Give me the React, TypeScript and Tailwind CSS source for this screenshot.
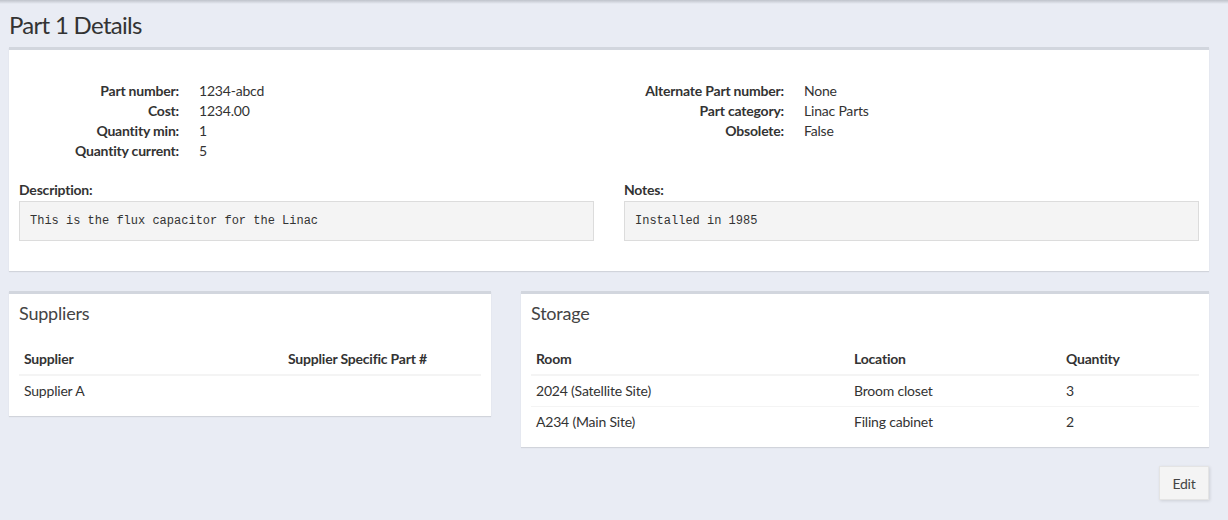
import React from "react";

const font = { fontFamily: "Lato, 'Noto Sans', sans-serif" };

const leftInfo = [
  ["Part number:", "1234-abcd"],
  ["Cost:", "1234.00"],
  ["Quantity min:", "1"],
  ["Quantity current:", "5"],
];

const rightInfo = [
  ["Alternate Part number:", "None"],
  ["Part category:", "Linac Parts"],
  ["Obsolete:", "False"],
];

const storage = [
  ["2024 (Satellite Site)", "Broom closet", "3"],
  ["A234 (Main Site)", "Filing cabinet", "2"],
];

function InfoList({ rows }: { rows: string[][] }) {
  return (
    <dl className="m-0">
      {rows.map(([k, v]) => (
        <div key={k} className="flex leading-[20px]">
          <dt className="w-[160px] shrink-0 text-right font-bold">{k}</dt>
          <dd className="ml-[20px]">{v}</dd>
        </div>
      ))}
    </dl>
  );
}

function Box({ title, className, children }: { title: string; className?: string; children: React.ReactNode }) {
  return (
    <div className={`bg-white border-t-[3px] border-[#d2d6de] shadow-[0_1px_1px_rgba(0,0,0,0.1)] ${className ?? ""}`}>
      <h3 className="px-[10px] pt-[9px] pb-[12px] text-[18px] leading-[20px] text-[#444]">{title}</h3>
      <div className="px-[10px] pb-[10px] pt-[9px]">{children}</div>
    </div>
  );
}

export default function App() {
  return (
    <div className="min-h-[520px] bg-[#e9ecf4] text-[14px] tracking-[-0.2px] text-[#333]" style={font}>
      <div className="h-[4px] bg-gradient-to-b from-[#bfc3cb] to-[#e9ecf4]" />
      <div className="pl-[9px] pr-[19px] pb-[19px]">
        <h1 className="mt-[8px] text-[24px] leading-[26px] font-normal tracking-[-0.7px] text-[#333]">Part 1 Details</h1>

        <div className="mt-[9px] bg-white border-t-[3px] border-[#d2d6de] shadow-[0_1px_1px_rgba(0,0,0,0.1)] px-[10px] pt-[31px] pb-[30px]">
          <div className="flex gap-[30px]">
            <div className="flex-1">
              <InfoList rows={leftInfo} />
            </div>
            <div className="flex-1">
              <InfoList rows={rightInfo} />
            </div>
          </div>
          <div className="mt-[19px] flex gap-[30px]">
            <div className="flex-1">
              <div className="font-bold leading-[20px]">Description:</div>
              <pre
                className="mt-[1px] border border-[#dcdcdc] bg-[#f4f4f4] px-[10px] py-[10px] text-[12px] leading-[18px] tracking-normal text-[#333]"
                style={{ fontFamily: "'Liberation Mono', monospace" }}
              >
                This is the flux capacitor for the Linac
              </pre>
            </div>
            <div className="flex-1">
              <div className="font-bold leading-[20px]">Notes:</div>
              <pre
                className="mt-[1px] border border-[#dcdcdc] bg-[#f4f4f4] px-[10px] py-[10px] text-[12px] leading-[18px] tracking-normal text-[#333]"
                style={{ fontFamily: "'Liberation Mono', monospace" }}
              >
                Installed in 1985
              </pre>
            </div>
          </div>
        </div>

        <div className="mt-[20px] flex items-start gap-[30px]">
          <Box title="Suppliers" className="w-[482px]">
            <table className="w-full border-collapse text-left">
              <thead>
                <tr>
                  <th className="w-[264px] border-b-2 border-[#f4f4f4] px-[5px] py-[5px] leading-[20px] font-bold">Supplier</th>
                  <th className="border-b-2 border-[#f4f4f4] px-[5px] py-[5px] leading-[20px] font-bold">Supplier Specific Part #</th>
                </tr>
              </thead>
              <tbody>
                <tr>
                  <td className="border-t border-[#f4f4f4] px-[5px] py-[5px] leading-[20px]">Supplier A</td>
                  <td className="border-t border-[#f4f4f4] px-[5px] py-[5px] leading-[20px]"></td>
                </tr>
              </tbody>
            </table>
          </Box>

          <Box title="Storage" className="flex-1">
            <table className="w-full border-collapse text-left">
              <thead>
                <tr>
                  <th className="w-[318px] border-b-2 border-[#f4f4f4] px-[5px] py-[5px] leading-[20px] font-bold">Room</th>
                  <th className="w-[212px] border-b-2 border-[#f4f4f4] px-[5px] py-[5px] leading-[20px] font-bold">Location</th>
                  <th className="border-b-2 border-[#f4f4f4] px-[5px] py-[5px] leading-[20px] font-bold">Quantity</th>
                </tr>
              </thead>
              <tbody>
                {storage.map((r) => (
                  <tr key={r[0]}>
                    {r.map((c, i) => (
                      <td key={i} className="border-t border-[#f4f4f4] px-[5px] py-[5px] leading-[20px]">
                        {c}
                      </td>
                    ))}
                  </tr>
                ))}
              </tbody>
            </table>
          </Box>
        </div>

        <div className="mt-[19px] flex justify-end">
          <button className="h-[34px] w-[50px] border border-[#e4e4e4] bg-[#f4f4f4] text-[14px] text-[#444] shadow-[1px_1px_3px_rgba(0,0,0,0.12)]">
            Edit
          </button>
        </div>
      </div>
    </div>
  );
}
